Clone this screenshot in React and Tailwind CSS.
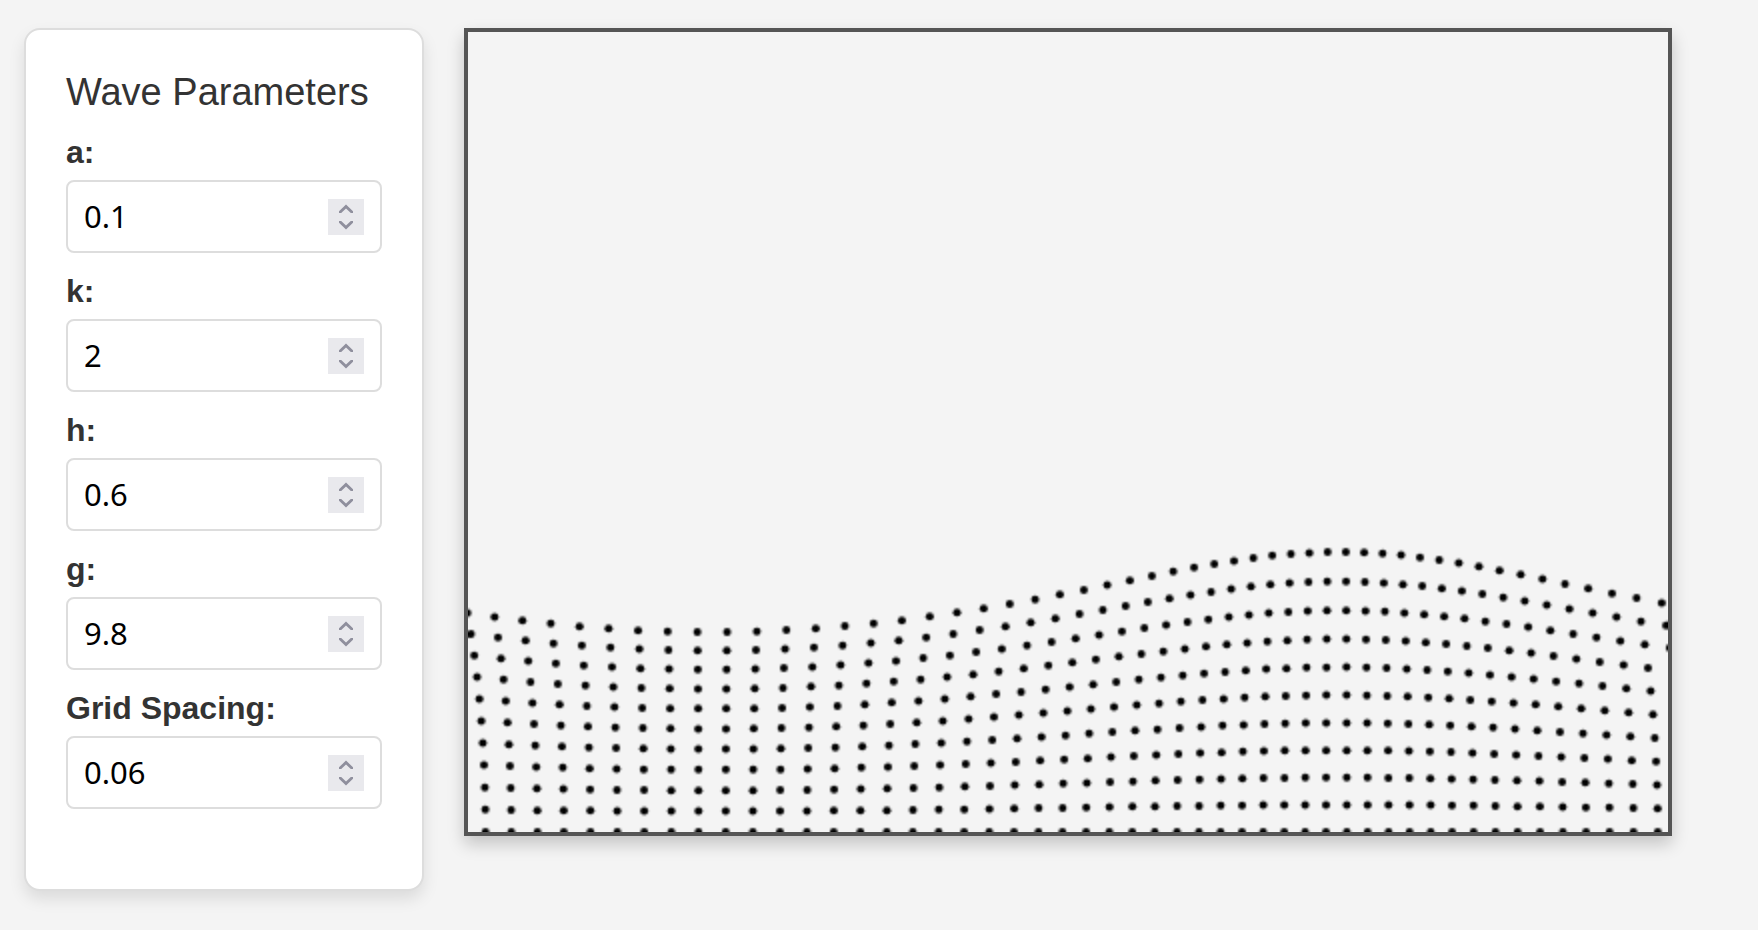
import { useEffect, useRef, useState } from "react";

const FIELDS = [
  { id: "a", label: "a:", step: 0.01 },
  { id: "k", label: "k:", step: 0.1 },
  { id: "h", label: "h:", step: 0.1 },
  { id: "g", label: "g:", step: 0.1 },
  { id: "spacing", label: "Grid Spacing:", step: 0.01 },
];

const WIDTH = 600;
const HEIGHT = 400;
const SCALE = 200;
const TIME = 0.3355;

function drawWave(ctx, { a, k, h, g, spacing }) {
  ctx.clearRect(0, 0, WIDTH, HEIGHT);
  if (!(spacing > 0.005) || !(k > 0) || !(h > 0)) return;
  const omega = Math.sqrt(g * k * Math.tanh(k * h));
  const columns = Math.round(4 / spacing);
  const rows = Math.round(h / spacing);
  ctx.fillStyle = "black";
  for (let i = 0; i <= columns; i++) {
    for (let j = 0; j <= rows; j++) {
      const x0 = -2 + i * spacing;
      const depth = j * spacing;
      const phase = k * x0 - omega * TIME;
      const x = x0 - (a * Math.cosh(k * depth) * Math.sin(phase)) / Math.sinh(k * h);
      const y = depth + (a * Math.sinh(k * depth) * Math.cos(phase)) / Math.sinh(k * h);
      ctx.beginPath();
      ctx.arc(WIDTH / 2 + x * SCALE, HEIGHT - y * SCALE, 2, 0, 2 * Math.PI);
      ctx.fill();
    }
  }
}

function StepButton({ label, path, onClick }) {
  return (
    <button
      type="button"
      aria-label={label}
      onClick={onClick}
      className="flex h-[18px] w-9 items-center justify-center text-[#8f8f9d]"
    >
      <svg width="36" height="18" viewBox="0 0 36 18" fill="currentColor" aria-hidden="true">
        <path d={path} />
      </svg>
    </button>
  );
}

function NumberField({ id, label, step, value, onChange }) {
  const nudge = (amount) => onChange(String(Number((Number(value) + amount).toFixed(4))));
  return (
    <div className="mb-5">
      <label htmlFor={id} className="mb-2.5 block text-[32px] leading-9 font-bold">
        {label}
      </label>
      <div className="flex items-center rounded-lg border-2 border-[#ddd] bg-white px-4 py-[15px]">
        <input
          id={id}
          type="number"
          step={step}
          value={value}
          onChange={(e) => onChange(e.target.value)}
          className="h-[39px] min-w-0 flex-1 appearance-none bg-transparent font-['Noto_Sans',sans-serif] text-[31px] text-black outline-none [-moz-appearance:textfield] [&::-webkit-inner-spin-button]:appearance-none"
        />
        <div className="flex flex-col bg-[#e9e9ed]">
          <StepButton
            label={`Increase ${label}`}
            path="M18 5.6 25 12.2V14H22.8L18 9.4 13.2 14H11V12.2Z"
            onClick={() => nudge(step)}
          />
          <StepButton
            label={`Decrease ${label}`}
            path="M18 12.4 25 5.8V4H22.8L18 8.6 13.2 4H11V5.8Z"
            onClick={() => nudge(-step)}
          />
        </div>
      </div>
    </div>
  );
}

export default function App() {
  const [values, setValues] = useState({ a: "0.1", k: "2", h: "0.6", g: "9.8", spacing: "0.06" });
  const canvasRef = useRef(null);

  useEffect(() => {
    const params = Object.fromEntries(Object.entries(values).map(([key, v]) => [key, Number(v)]));
    drawWave(canvasRef.current.getContext("2d"), params);
  }, [values]);

  return (
    <main className="flex min-h-screen items-start gap-10 bg-[#f4f4f4] px-6 pt-7 pb-10 font-['Liberation_Sans',Arial,sans-serif] text-[#333]">
      <form className="w-[400px] shrink-0 rounded-2xl border-2 border-[#ddd] bg-white px-10 pt-10 pb-[60px] shadow-[0_8px_16px_rgba(0,0,0,0.1)]">
        <h2 className="mb-5 text-[38px] leading-[44px]">Wave Parameters</h2>
        {FIELDS.map((field) => (
          <NumberField
            key={field.id}
            {...field}
            value={values[field.id]}
            onChange={(v) => setValues((prev) => ({ ...prev, [field.id]: v }))}
          />
        ))}
      </form>
      <canvas
        ref={canvasRef}
        width={WIDTH}
        height={HEIGHT}
        role="img"
        aria-label="Water particle positions under a travelling wave"
        className="w-full max-w-[1208px] min-w-0 border-4 border-[#555] shadow-[0_8px_16px_rgba(0,0,0,0.2)]"
      />
    </main>
  );
}
